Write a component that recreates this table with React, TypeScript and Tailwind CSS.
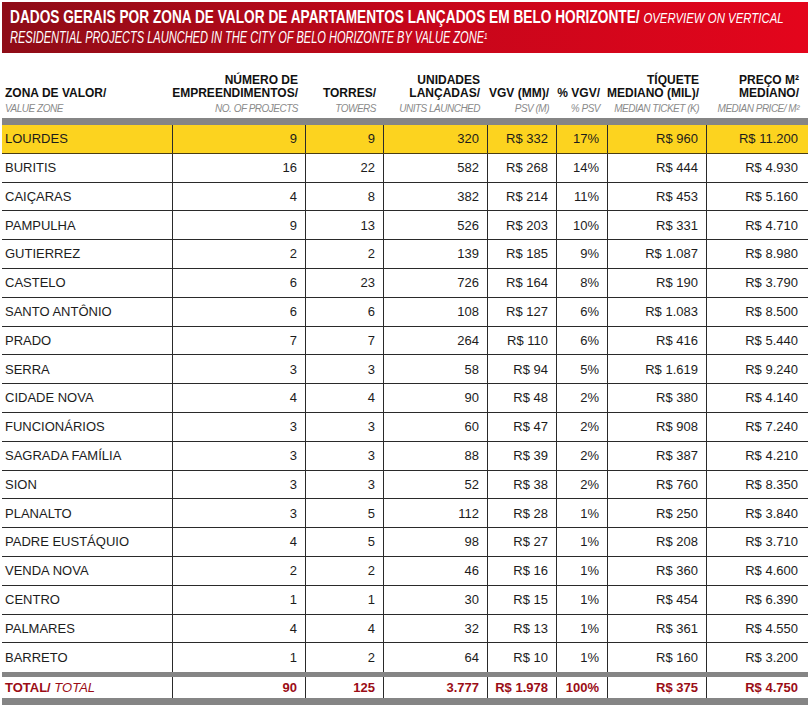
import React from 'react';

type Row = [string, string, string, string, string, string, string, string];

const rows: Row[] = [
  ['LOURDES', '9', '9', '320', 'R$ 332', '17%', 'R$ 960', 'R$ 11.200'],
  ['BURITIS', '16', '22', '582', 'R$ 268', '14%', 'R$ 444', 'R$ 4.930'],
  ['CAIÇARAS', '4', '8', '382', 'R$ 214', '11%', 'R$ 453', 'R$ 5.160'],
  ['PAMPULHA', '9', '13', '526', 'R$ 203', '10%', 'R$ 331', 'R$ 4.710'],
  ['GUTIERREZ', '2', '2', '139', 'R$ 185', '9%', 'R$ 1.087', 'R$ 8.980'],
  ['CASTELO', '6', '23', '726', 'R$ 164', '8%', 'R$ 190', 'R$ 3.790'],
  ['SANTO ANTÔNIO', '6', '6', '108', 'R$ 127', '6%', 'R$ 1.083', 'R$ 8.500'],
  ['PRADO', '7', '7', '264', 'R$ 110', '6%', 'R$ 416', 'R$ 5.440'],
  ['SERRA', '3', '3', '58', 'R$ 94', '5%', 'R$ 1.619', 'R$ 9.240'],
  ['CIDADE NOVA', '4', '4', '90', 'R$ 48', '2%', 'R$ 380', 'R$ 4.140'],
  ['FUNCIONÁRIOS', '3', '3', '60', 'R$ 47', '2%', 'R$ 908', 'R$ 7.240'],
  ['SAGRADA FAMÍLIA', '3', '3', '88', 'R$ 39', '2%', 'R$ 387', 'R$ 4.210'],
  ['SION', '3', '3', '52', 'R$ 38', '2%', 'R$ 760', 'R$ 8.350'],
  ['PLANALTO', '3', '5', '112', 'R$ 28', '1%', 'R$ 250', 'R$ 3.840'],
  ['PADRE EUSTÁQUIO', '4', '5', '98', 'R$ 27', '1%', 'R$ 208', 'R$ 3.710'],
  ['VENDA NOVA', '2', '2', '46', 'R$ 16', '1%', 'R$ 360', 'R$ 4.600'],
  ['CENTRO', '1', '1', '30', 'R$ 15', '1%', 'R$ 454', 'R$ 6.390'],
  ['PALMARES', '4', '4', '32', 'R$ 13', '1%', 'R$ 361', 'R$ 4.550'],
  ['BARRETO', '1', '2', '64', 'R$ 10', '1%', 'R$ 160', 'R$ 3.200'],
];

const total: Row = ['', '90', '125', '3.777', 'R$ 1.978', '100%', 'R$ 375', 'R$ 4.750'];

const headers: { pt: string[]; en: string }[] = [
  { pt: ['ZONA DE VALOR/'], en: 'VALUE ZONE' },
  { pt: ['NÚMERO DE', 'EMPREENDIMENTOS/'], en: 'NO. OF PROJECTS' },
  { pt: ['TORRES/'], en: 'TOWERS' },
  { pt: ['UNIDADES', 'LANÇADAS/'], en: 'UNITS LAUNCHED' },
  { pt: ['VGV (MM)/'], en: 'PSV (M)' },
  { pt: ['% VGV/'], en: '% PSV' },
  { pt: ['TÍQUETE', 'MEDIANO (MIL)/'], en: 'MEDIAN TICKET (K)' },
  { pt: ['PREÇO M²', 'MEDIANO/'], en: 'MEDIAN PRICE/ M²' },
];

const cols = 'grid grid-cols-[170px_133px_78px_104px_69px_51px_99px_100px]';

export default function App() {
  return (
    <div className="w-[810px] h-[711px] bg-white font-['Liberation_Sans',Arial,sans-serif] text-[#1c1c1c] overflow-hidden">
      {/* faixa do título */}
      <div className="mx-[2px] mt-[2px] h-[51px] bg-gradient-to-r from-[#8e0c17] via-[#c4061a] to-[#e4051c] px-[8px] pt-[5px] text-white whitespace-nowrap overflow-hidden">
        <div className="w-max origin-left scale-x-[0.76] text-[18px] leading-[21px]">
          <span className="font-bold">DADOS GERAIS POR ZONA DE VALOR DE APARTAMENTOS LANÇADOS EM BELO HORIZONTE/</span>{' '}
          <span className="italic text-[15px]">OVERVIEW ON VERTICAL</span>
        </div>
        <div className="w-max origin-left scale-x-[0.69] italic text-[16px] leading-[20px]">
          RESIDENTIAL PROJECTS LAUNCHED IN THE CITY OF BELO HORIZONTE BY VALUE ZONE<sup className="text-[9px]">1</sup>
        </div>
      </div>

      <div className="px-[2px]">
        {/* cabeçalho */}
        <div className={`${cols} h-[65px] items-end pb-[3px]`}>
          {headers.map((h, i) => (
            <div key={i} className={`${i === 0 ? 'text-left pl-[3px]' : 'text-right pr-[7px]'} leading-[13px]`}>
              {h.pt.map((l) => (
                <div key={l} className="text-[12px] font-bold text-[#111]">{l}</div>
              ))}
              <div className="text-[10px] italic tracking-[-0.5px] text-[#8a8a8a] mt-[2px]">{h.en}</div>
            </div>
          ))}
        </div>
        <div className="h-[7px] bg-[#858585]" />

        {rows.map((r, idx) => {
          const first = idx === 0;
          const last = idx === rows.length - 1;
          return (
            <div
              key={r[0]}
              className={`${cols} h-[28.8px] ${first ? 'bg-[#fcd31f] border-b border-[#4a3d12]' : last ? '' : 'border-b border-[#2a2a2a]'} text-[13px]`}
            >
              {r.map((c, i) => (
                <div
                  key={i}
                  className={`flex items-center ${i === 0 ? 'pl-[3px]' : 'justify-end pr-[8px] border-l border-[#2a2a2a]'}`}
                >
                  {c}
                </div>
              ))}
            </div>
          );
        })}
        <div className="h-[5px] bg-[#858585]" />

        <div className={`${cols} h-[21px] text-[13px] font-bold text-[#9b0d16]`}>
          {total.map((c, i) => (
            <div
              key={i}
              className={`flex items-center ${i === 0 ? 'pl-[3px]' : 'justify-end pr-[8px] border-l border-[#2a2a2a]'}`}
            >
              {i === 0 ? (
                <span>
                  TOTAL/ <span className="italic font-normal">TOTAL</span>
                </span>
              ) : (
                c
              )}
            </div>
          ))}
        </div>
        <div className="h-[7px] bg-[#858585]" />
      </div>
    </div>
  );
}
